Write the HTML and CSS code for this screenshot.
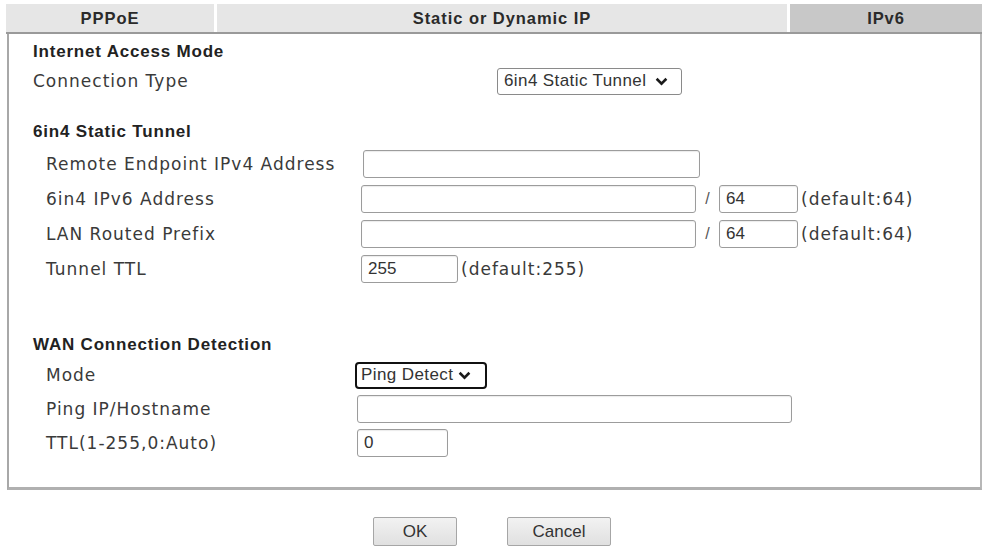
FILE: index.html
```html
<!DOCTYPE html>
<html>
<head>
<meta charset="utf-8">
<link rel="stylesheet" href="styles.css">
</head>
<body>
<div class="tabs">
  <div class="tab tab-pppoe">PPPoE</div>
  <div class="tab tab-static">Static or Dynamic IP</div>
  <div class="tab tab-ipv6 active">IPv6</div>
</div>
<div class="panel">
  <div class="head head-first">Internet Access Mode</div>
  <div class="row row-ct">
    <div class="label label-ct">Connection Type</div>
    <div class="select select-ct"><span>6in4 Static Tunnel</span><svg class="chev" viewBox="0 0 12 8" width="13" height="9"><path d="M1.5 1.5 L6 6 L10.5 1.5" fill="none" stroke="#1a1a1a" stroke-width="2.4"/></svg></div>
  </div>

  <div class="head head-tunnel">6in4 Static Tunnel</div>
  <div class="group">
    <div class="row row-t">
      <div class="label label-t">Remote Endpoint IPv4 Address</div>
      <div class="input w-remote"></div>
    </div>
    <div class="row row-t">
      <div class="label label-t">6in4 IPv6 Address</div>
      <div class="input w-addr"></div>
      <span class="slash">/</span>
      <div class="input w-pfx">64</div>
      <span class="note">(default:64)</span>
    </div>
    <div class="row row-t">
      <div class="label label-t">LAN Routed Prefix</div>
      <div class="input w-addr"></div>
      <span class="slash">/</span>
      <div class="input w-pfx">64</div>
      <span class="note">(default:64)</span>
    </div>
    <div class="row row-t">
      <div class="label label-t">Tunnel TTL</div>
      <div class="input w-ttl">255</div>
      <span class="note">(default:255)</span>
    </div>
  </div>

  <div class="head head-wan">WAN Connection Detection</div>
  <div class="group">
    <div class="row row-w">
      <div class="label label-w">Mode</div>
      <div class="select select-mode"><span>Ping Detect</span><svg class="chev" viewBox="0 0 12 8" width="13" height="9"><path d="M1.5 1.5 L6 6 L10.5 1.5" fill="none" stroke="#1a1a1a" stroke-width="2.4"/></svg></div>
    </div>
    <div class="row row-w">
      <div class="label label-w">Ping IP/Hostname</div>
      <div class="input w-ping"></div>
    </div>
    <div class="row row-w">
      <div class="label label-w">TTL(1-255,0:Auto)</div>
      <div class="input w-ttl2">0</div>
    </div>
  </div>
</div>
<div class="buttons">
  <button class="btn btn-ok">OK</button>
  <button class="btn btn-cancel">Cancel</button>
</div>
</body>
</html>
```

FILE: styles.css
```css
* { box-sizing: border-box; }
html, body { margin: 0; padding: 0; background: #fff; }
body { width: 984px; height: 548px; overflow: hidden; font-family: "DejaVu Sans", Verdana, sans-serif; color: #333; }

.tabs {
  display: flex;
  gap: 3px;
  margin-left: 6px;
  width: 976px;
  padding-top: 4px;
  border-bottom: 2px solid #9a9a9a;
}
.tab {
  height: 28px;
  display: flex;
  align-items: center;
  justify-content: center;
  background: #e6e6e6;
  font-family: "Liberation Sans", Arial, sans-serif;
  font-weight: bold;
  font-size: 16.5px;
  letter-spacing: 0.95px;
  color: #2a2a2a;
}
.tab-pppoe { width: 208px; }
.tab-static { width: 570px; }
.tab-ipv6 { flex: 1; }
.tab.active { background: #c8c8c8; }

.panel {
  margin-left: 7px;
  width: 975px;
  border-left: 2px solid #a8a8a8;
  border-right: 2px solid #b8b8b8;
  border-bottom: 3px solid #b0b0b0;
  padding: 8px 0 27px 24px;
}

.head {
  height: 20px;
  line-height: 20px;
  font-family: "Liberation Sans", Arial, sans-serif;
  font-weight: bold;
  font-size: 17px;
  letter-spacing: 0.8px;
  color: #222;
}
.head-tunnel { margin-top: 22px; }
.head-wan { margin-top: 49px; }

.row { display: flex; align-items: center; }
.row-ct { height: 38px; }
.row-t { height: 35px; }
.row-w { height: 34px; }
.group { padding-left: 13px; }
.head-tunnel + .group { margin-top: 4px; }
.head-wan + .group { margin-top: 3px; }

.label {
  font-size: 17px;
  letter-spacing: 1px;
  color: #3a3a3a;
  white-space: nowrap;
}
.label-ct { width: 464px; }
.label-t { width: 316px; }
.label-w { width: 311px; }

.input {
  height: 28px;
  border: 1px solid #9c9c9c;
  border-radius: 3px;
  background: #fff;
  box-shadow: inset 0 1px 1px rgba(0,0,0,0.08);
  font-family: "Liberation Sans", Arial, sans-serif;
  font-size: 17px;
  color: #333;
  padding-left: 6px;
  display: flex;
  align-items: center;
}
.w-remote { width: 337px; margin-left: 1px; }
.w-addr { width: 335px; margin-left: -1px; }
.w-pfx { width: 79px; }
.w-ttl { width: 97px; margin-left: -1px; }
.w-ping { width: 435px; }
.w-ttl2 { width: 91px; }

.slash {
  width: 23px;
  text-align: center;
  font-family: "Liberation Sans", Arial, sans-serif;
  font-size: 16px;
  color: #555;
}
.note {
  margin-left: 3px;
  font-size: 17px;
  letter-spacing: 1px;
  color: #3a3a3a;
}

.select {
  height: 27px;
  display: flex;
  align-items: center;
  gap: 9px;
  padding: 0 0 0 6px;
  font-family: "Liberation Sans", Arial, sans-serif;
  font-size: 17px;
  letter-spacing: 0.4px;
  color: #333;
  background: #fff;
}
.select-ct { width: 185px; border: 1px solid #8a8a8a; border-radius: 3px; }
.select-mode { width: 132px; border: 2px solid #111; border-radius: 4px; padding-left: 4px; gap: 5px; margin-left: -2px; }
.chev { display: block; }

.buttons {
  display: flex;
  gap: 50px;
  padding-left: 373px;
  margin-top: 27px;
}
.btn {
  height: 29px;
  border: 1px solid #a6a6a6;
  border-radius: 2px;
  background: linear-gradient(#f2f2f2, #e0e0e0);
  font-family: "Liberation Sans", Arial, sans-serif;
  font-size: 17px;
  color: #333;
  padding: 0;
}
.btn-ok { width: 84px; }
.btn-cancel { width: 104px; }
```
